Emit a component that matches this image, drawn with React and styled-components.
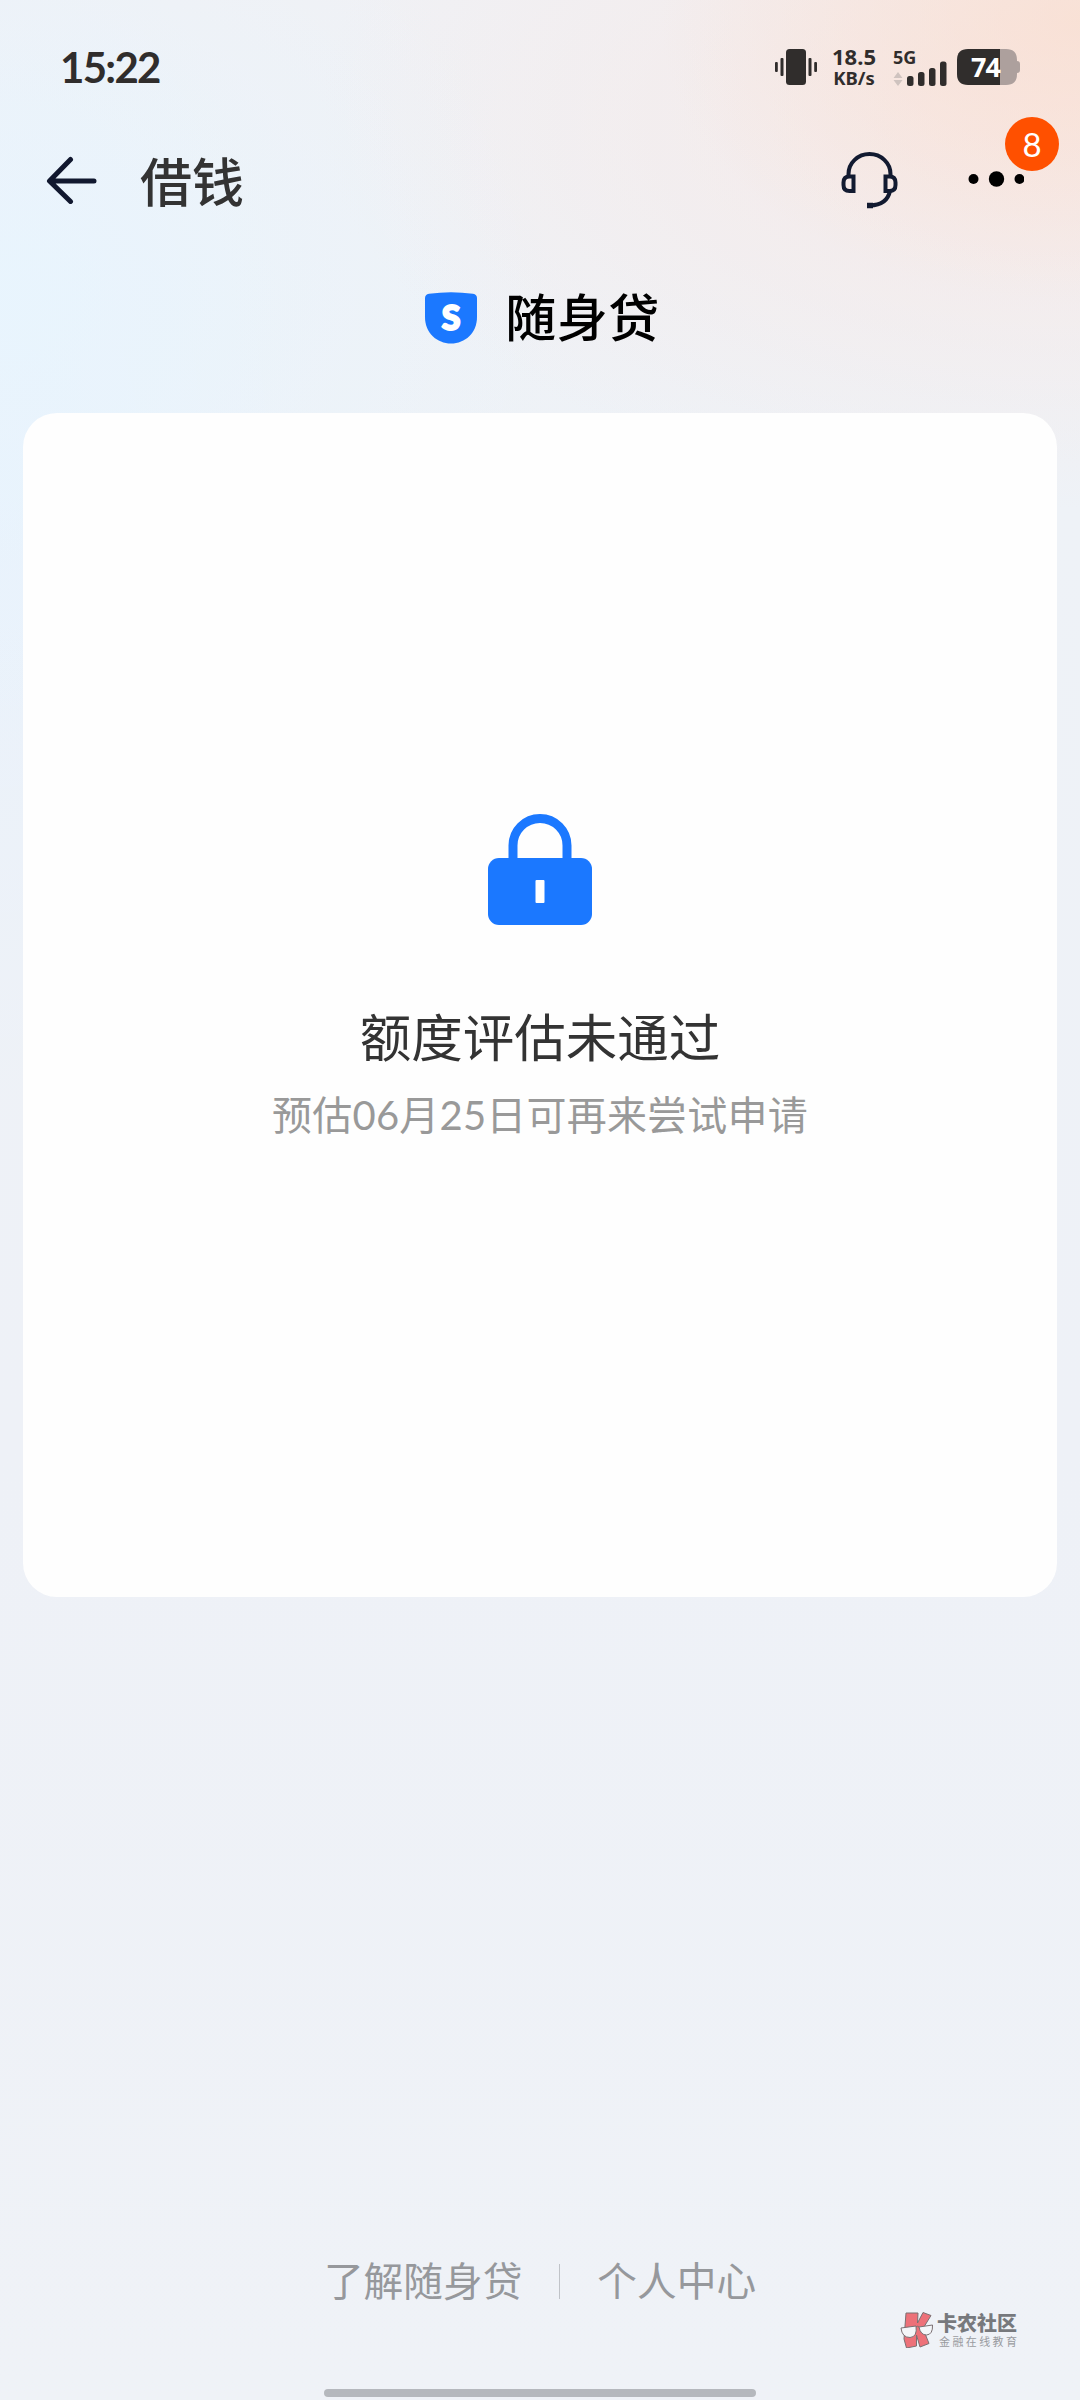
import React from "react";
import styled, { createGlobalStyle } from "styled-components";

const GlobalStyle = createGlobalStyle`
  * {
    box-sizing: border-box;
  }

  body {
    margin: 0;
    font-family: Lato, "Noto Sans CJK SC", sans-serif;
  }

  svg {
    flex-shrink: 0;
  }
`

const Page = styled.div`
  width: 1080px;
  height: 2400px;
  display: flex;
  flex-direction: column;
  overflow: hidden;
  background:
    radial-gradient(ellipse 420px 280px at 1080px 20px, rgba(250, 221, 206, 0.7), rgba(250, 226, 214, 0)),
    radial-gradient(ellipse 760px 400px at 1080px 110px, rgba(248, 231, 227, 0.85), rgba(248, 231, 227, 0)),
    radial-gradient(ellipse 560px 460px at 0 300px, rgba(232, 245, 254, 0.85), rgba(232, 245, 254, 0)),
    radial-gradient(ellipse 300px 600px at 0 500px, rgba(230, 241, 255, 0.6), rgba(230, 241, 255, 0)),
    linear-gradient(#f0f1f5, #eef2f7 20%, #eef1f7 60%, #eff2f7);
`

const StatusBar = styled.div`
  height: 134px;
  display: flex;
  justify-content: space-between;
  align-items: center;
  padding: 0 60px;
  color: #302d2c;
`

const Time = styled.div`
  font-size: 42px;
  font-weight: 700;
  line-height: 50px;
  letter-spacing: -1.7px;
`

const StatusIcons = styled.div`
  display: flex;
  align-items: center;
`

const Speed = styled.div`
  width: 46px;
  margin: 0 16px 0 13px;
  font-family: "Noto Sans", sans-serif;
  font-weight: 700;
  text-align: center;
  line-height: 21px;
`

const SpeedValue = styled.div`
  font-size: 22px;
`

const SpeedUnit = styled.div`
  font-size: 18.5px;
`

const Network = styled.div`
  width: 56px;
  height: 38px;
  margin-right: 8px;
  display: flex;
  flex-direction: column;
`

const NetworkType = styled.div`
  height: 12px;
  font-family: "Noto Sans", sans-serif;
  font-size: 18px;
  font-weight: 700;
  line-height: 18px;
`

const NavBar = styled.div`
  height: 92px;
  display: flex;
  align-items: center;
  padding: 0 56px 0 46px;
`

const NavTitle = styled.div`
  margin-left: 42px;
  padding-top: 4px;
  flex: 1;
  font-size: 52px;
  font-weight: 500;
  line-height: 60px;
  color: #333;
`

const More = styled.div`
  position: relative;
  width: 58px;
  height: 56px;
  margin-left: 68px;
`

const Badge = styled.div`
  position: absolute;
  left: 39px;
  top: -35px;
  width: 54px;
  height: 54px;
  border-radius: 50%;
  background: #ff5000;
  color: #fff;
  font-size: 33px;
  line-height: 54px;
  text-align: center;
`

const Brand = styled.div`
  height: 187px;
  display: flex;
  align-items: center;
  justify-content: center;
  padding: 0 0 4px 5px;
`

const BrandName = styled.div`
  margin-left: 28px;
  font-size: 51px;
  font-weight: 500;
  line-height: 60px;
  letter-spacing: 0.5px;
  color: #000;
`

const Card = styled.div`
  height: 1184px;
  margin: 0 23px;
  padding-top: 401px;
  display: flex;
  flex-direction: column;
  align-items: center;
  border-radius: 34px;
  background: #fefefe;
`

const CardTitle = styled.div`
  margin-top: 80px;
  font-size: 51.5px;
  line-height: 64px;
  color: #333;
`

const CardNote = styled.div`
  margin-top: 21px;
  font-size: 40px;
  line-height: 50px;
  letter-spacing: 0.2px;
  color: #999;
`

const Links = styled.div`
  margin-top: 657px;
  height: 54px;
  display: flex;
  justify-content: center;
  align-items: center;
`

const FooterLink = styled.div`
  font-size: 39.7px;
  line-height: 54px;
  color: #96989c;
`

const Divider = styled.div`
  width: 1px;
  height: 35px;
  margin: 0 37px;
  background: #c0c3c8;
`

const Watermark = styled.div`
  align-self: flex-end;
  display: flex;
  align-items: center;
  height: 40px;
  margin: 2px 63px 0 0;
`

const WatermarkText = styled.div`
  margin-left: 3px;
  font-family: "Noto Sans CJK SC", sans-serif;
`

const WatermarkName = styled.div`
  font-size: 20px;
  font-weight: 900;
  line-height: 22px;
  color: #77797d;
`

const WatermarkSlogan = styled.div`
  padding-left: 2px;
  font-size: 11px;
  letter-spacing: 2.4px;
  line-height: 14px;
  margin-right: -3px;
  color: #999b9f;
`

const HomeBar = styled.div`
  width: 432px;
  height: 8px;
  margin: auto auto 3px;
  border-radius: 4px;
  background: #b5b8bd;
`

function VibrateIcon() {
  return (
    <svg width="43" height="38" viewBox="0 0 43 38" fill="#302d2c">
      <rect x="11" y="1" width="20" height="36" rx="3.5" />
      <rect x="5.5" y="10" width="3" height="18" rx="1" />
      <rect x="33.500" y="10" width="3" height="18" rx="1" />
      <rect x="0" y="14" width="2.8" height="10" rx="1" />
      <rect x="39.200" y="14" width="2.8" height="10" rx="1" />
    </svg>
  )
}

function SignalIcon() {
  return (
    <svg width="56" height="26" viewBox="0 0 56 26" fill="#302d2c">
      <path d="M5 12l4.500 6h-9zM5 26l4.500-6h-9z" fill="#cfc3bf" />
      <rect x="14" y="16" width="6.500" height="10" rx="2.500" />
      <rect x="25" y="12" width="6.500" height="14" rx="2.500" />
      <rect x="36" y="8" width="6.500" height="18" rx="2.500" />
      <rect x="47" y="1.500" width="6.500" height="24.500" rx="2.500" />
    </svg>
  )
}

function BatteryIcon() {
  return (
    <svg width="63" height="38" viewBox="0 0 63 38">
      <path d="M43 1h6q11 0 11 11v1q3 0 3 3v6q0 3-3 3v1q0 11-11 11h-6z" fill="#ada09d" />
      <path d="M43 1H11Q0 1 0 12v14q0 11 11 11h32z" fill="#302d2c" />
      <text x="28.500" y="28.500" textAnchor="middle" fontFamily="Noto Sans" fontSize="27" fontWeight="700" letterSpacing="-1" fill="#fff">74</text>
    </svg>
  )
}

function BackIcon() {
  return (
    <svg width="52" height="48" viewBox="0 0 52 48" fill="none" stroke="#11182f" strokeWidth="5" strokeLinecap="round" strokeLinejoin="round">
      <path d="M24.500 3.500L3.500 25L24.500 45.500M4 25H48" />
    </svg>
  )
}

function HeadsetIcon() {
  return (
    <svg width="58" height="58" viewBox="0 0 58 58" fill="none" stroke="#121a30" strokeWidth="4">
      <path d="M8.500 25V23a21 20 0 0 1 42 0v2" />
      <path d="M13.500 25.500v14.500H9.500q-6 0-6-6v-2.500q0-6 6-6zM45.500 25.500v14.500h4q6 0 6-6v-2.500q0-6-6-6z" />
      <path d="M50 40q-3 14-20 14.500" />
      <path d="M27 54.500h6" strokeWidth="5.500" />
    </svg>
  )
}

function MoreIcon() {
  return (
    <svg width="58" height="56" viewBox="0 0 58 56" fill="#000">
      <circle cx="7.500" cy="27" r="5" />
      <circle cx="30.500" cy="27" r="7.700" />
      <circle cx="53.500" cy="27" r="5" />
    </svg>
  )
}

function ShieldIcon() {
  return (
    <svg width="52" height="52" viewBox="0 0 52 52">
      <path d="M0 6Q0 2.500 4 1.800Q26-1.300 48 1.800Q52 2.500 52 6V25C52 41 40 51.500 26 51.500S0 41 0 25z" fill="#1b78ff" />
      <text x="26" y="37.500" textAnchor="middle" fontFamily="Lato" fontSize="34" fontWeight="900" fill="#fff" stroke="#fff" strokeWidth="2">S</text>
    </svg>
  )
}

function LockIcon() {
  return (
    <svg width="104" height="111" viewBox="0 0 104 111">
      <path d="M25 50V31.500a27 27 0 0 1 54 0V50" fill="none" stroke="#1b78ff" strokeWidth="9" />
      <rect y="44" width="104" height="67" rx="11" fill="#1b78ff" />
      <rect x="47.500" y="66" width="9" height="23" rx="1" fill="#fff" />
    </svg>
  )
}

function CommunityIcon() {
  return (
    <svg width="34" height="36" viewBox="0 0 34 36" stroke="#7b7073" strokeWidth="1">
      <path d="M6 1h12l-.500 10 5.500-10.500 8 3-8 13 6 15-9 3.500-3.500-12v11l-10 2-2.500-9z" fill="#ed7179" />
      <path d="M1 16l15-2q1.500 11-6 11.500-8 0-9-9.500zM19 15l13.500-2q.500 9.500-6 10-6 0-7.500-8z" fill="#f4f6f9" />
      <path d="M16 15q1.500-1.500 3 0" fill="none" />
    </svg>
  )
}

function App() {
  return (
    <Page>
      <GlobalStyle />
      <StatusBar>
        <Time>15:22</Time>
        <StatusIcons>
          <VibrateIcon />
          <Speed>
            <SpeedValue>18.5</SpeedValue>
            <SpeedUnit>KB/s</SpeedUnit>
          </Speed>
          <Network>
            <NetworkType>5G</NetworkType>
            <SignalIcon />
          </Network>
          <BatteryIcon />
        </StatusIcons>
      </StatusBar>
      <NavBar>
        <BackIcon />
        <NavTitle>借钱</NavTitle>
        <HeadsetIcon />
        <More>
          <MoreIcon />
          <Badge>8</Badge>
        </More>
      </NavBar>
      <Brand>
        <ShieldIcon />
        <BrandName>随身贷</BrandName>
      </Brand>
      <Card>
        <LockIcon />
        <CardTitle>额度评估未通过</CardTitle>
        <CardNote>预估06月25日可再来尝试申请</CardNote>
      </Card>
      <Links>
        <FooterLink>了解随身贷</FooterLink>
        <Divider />
        <FooterLink>个人中心</FooterLink>
      </Links>
      <Watermark>
        <CommunityIcon />
        <WatermarkText>
          <WatermarkName>卡农社区</WatermarkName>
          <WatermarkSlogan>金融在线教育</WatermarkSlogan>
        </WatermarkText>
      </Watermark>
      <HomeBar />
    </Page>
  )
}

export default App;
